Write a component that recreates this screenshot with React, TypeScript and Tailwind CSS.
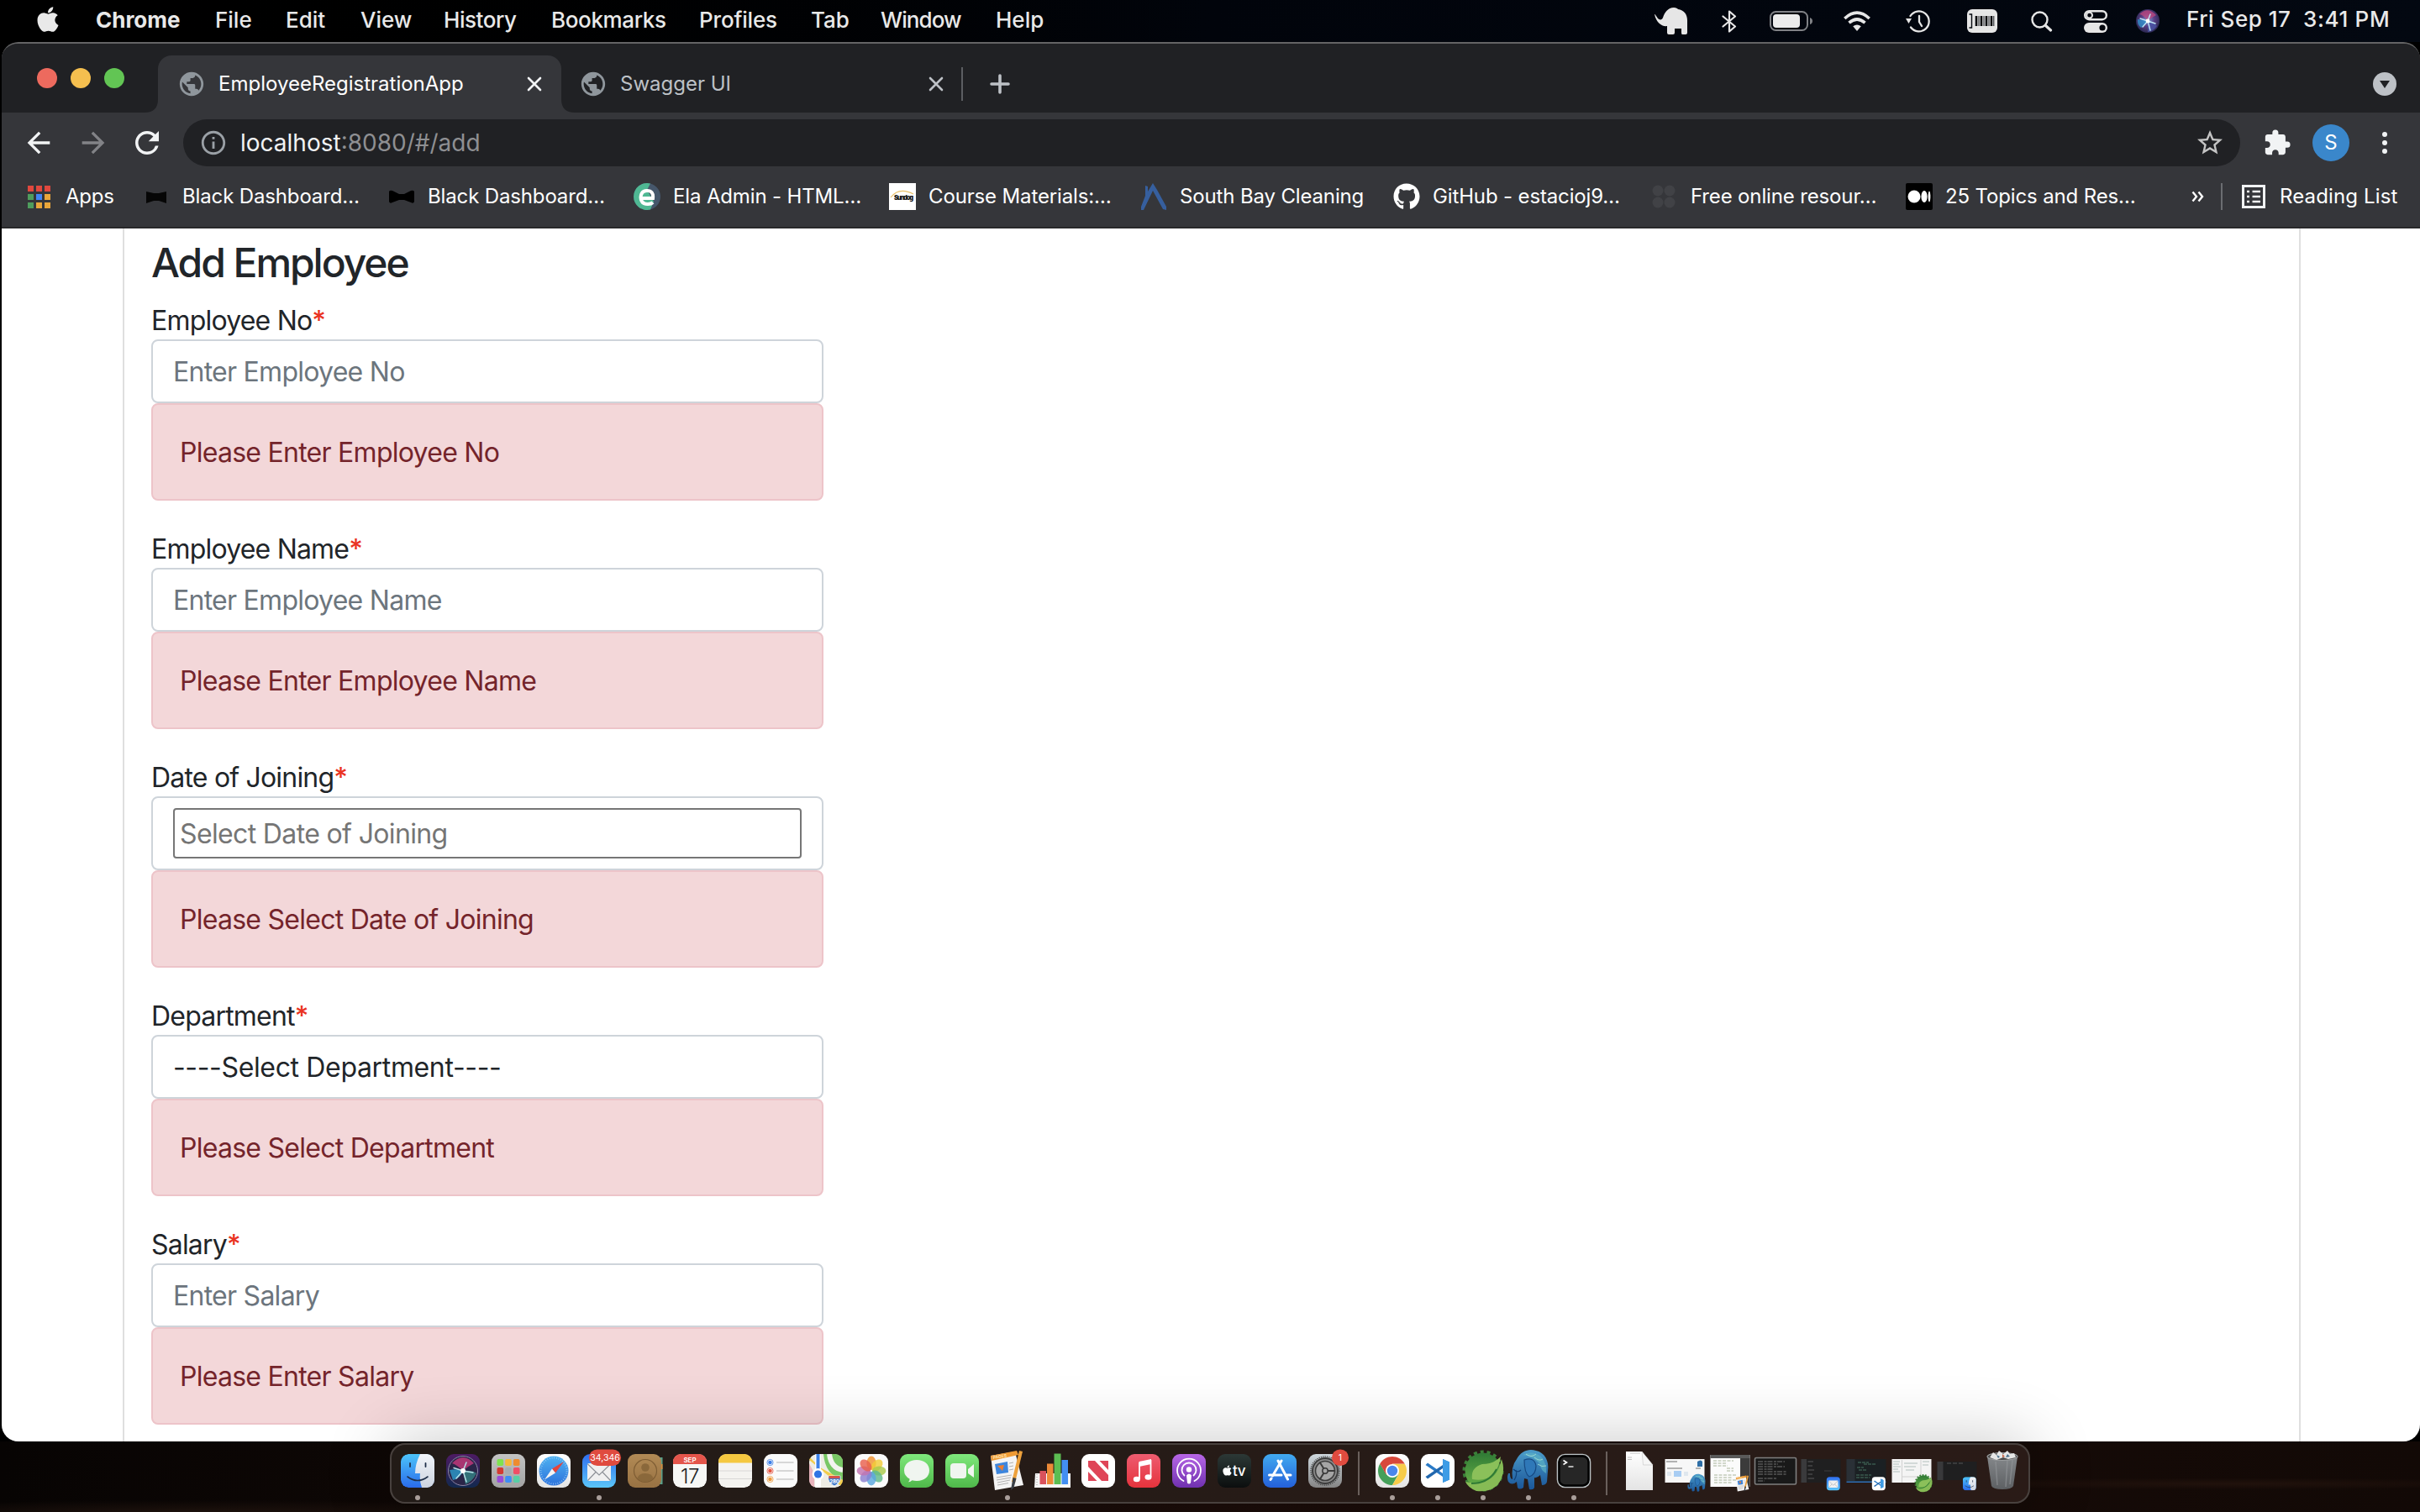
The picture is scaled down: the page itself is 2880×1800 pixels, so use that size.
import type { ReactNode } from "react";
import { FaApple, FaGithub } from "react-icons/fa";
import { MdArrowBack, MdArrowForward, MdExtension, MdInfoOutline, MdPublic, MdRefresh, MdStarBorder } from "react-icons/md";

/* ---------- Menu bar ---------- */

const menus = [
  { label: "Chrome", cls: "w-[142px] font-bold" },
  { label: "File", cls: "w-[84px]" },
  { label: "Edit", cls: "w-[89px]" },
  { label: "View", cls: "w-[99px]" },
  { label: "History", cls: "w-[128px] tracking-[-0.017em]" },
  { label: "Bookmarks", cls: "w-[176px] tracking-[-0.014em]" },
  { label: "Profiles", cls: "w-[133px] tracking-[-0.007em]" },
  { label: "Tab", cls: "w-[83px]" },
  { label: "Window", cls: "w-[137px] tracking-[-0.035em]" },
  { label: "Help", cls: "w-[80px]" },
];

function SiriOrb({ className }: { className: string }) {
  return (
    <svg className={className} viewBox="0 0 28 28">
      <defs>
        <radialGradient id="orbBg" cx="50%" cy="45%" r="55%">
          <stop offset="0" stopColor="#7f9fd8" />
          <stop offset="0.5" stopColor="#5a3f86" />
          <stop offset="1" stopColor="#2a2750" />
        </radialGradient>
      </defs>
      <circle cx="14" cy="14" r="14" fill="url(#orbBg)" />
      <path d="M4 6 Q14 -4 24 7 Q18 10 14 14 Q8 6 4 6Z" fill="#c0487f" opacity="0.75" />
      <path d="M2 12 Q8 12 14 14 Q10 20 6 22 Q1 18 2 12Z" fill="#2f8fc9" opacity="0.8" />
      <path d="M14 14 Q22 16 25 20 Q20 27 14 27Z" fill="#4a55a8" opacity="0.8" />
      <path d="M14 14 L5 11 M14 14 L8 21 M14 14 L17 25 M14 14 L23 17 M14 14 L17 6" stroke="#bfe6f5" strokeWidth="1.4" strokeLinecap="round" />
      <circle cx="14" cy="14" r="2.4" fill="#fff" />
    </svg>
  );
}

function MenuBar() {
  return (
    <header className="flex h-[50px] items-center bg-linear-to-r from-black via-[#01040b] to-[#030811] text-[26px] leading-none font-medium text-[#e9e9e9]">
      <div className="flex w-[114px] pl-[41px]">
        <FaApple className="-mt-1 h-[34px] w-[32px]" />
      </div>
      <nav className="flex w-[1855px] pb-[2px]">
        {menus.map((m) => (
          <span key={m.label} className={m.cls}>{m.label}</span>
        ))}
      </nav>
      <svg className="h-[32px] w-[40px]" viewBox="0 0 40 32" fill="#e6e6e6">
        <path d="M0 8 C1 8 2 10 4 13 C6 15 9 15 10 12 C12 6 16 0 23 0 C26 0 27 1 28 2 C35 3 39 8 39 15 V30 Q39 32 37 32 H33 Q32 32 32 30 V25 H24 V30 Q24 32 22 32 H17 Q15 32 15 30 V22 C9 23 2 18 0 8Z" />
      </svg>
      <svg className="ml-[40px] h-[27px] w-[18px]" viewBox="0 0 18 27" fill="none" stroke="#e6e6e6" strokeWidth="2.2" strokeLinejoin="round" strokeLinecap="round">
        <path d="M1.5 7.5 L16 19.5 L9 25.5 V1.5 L16 7.5 L1.5 19.5" />
      </svg>
      <svg className="ml-[39px] h-[24px] w-[51px]" viewBox="0 0 51 24">
        <rect x="1" y="1" width="44" height="22" rx="6.5" fill="none" stroke="#808286" strokeWidth="2" />
        <rect x="4" y="4" width="32" height="16" rx="4" fill="#ececec" />
        <path d="M48 8 Q51 9 51 12 Q51 15 48 16Z" fill="#808286" />
      </svg>
      <svg className="ml-[37px] h-[24px] w-[32px]" viewBox="0 0 32 24" fill="none" stroke="#e6e6e6" strokeWidth="3.6">
        <path d="M1.3 9 Q16 -4.6 30.7 9" />
        <path d="M6.5 14.2 Q16 5.8 25.5 14.2" />
        <path d="M11.2 18.3 Q16 14.6 20.8 18.3 L16 24Z" fill="#e6e6e6" stroke="none" />
      </svg>
      <svg className="ml-[41px] h-[27px] w-[31px]" viewBox="0 0 31 27" fill="none" stroke="#e6e6e6" strokeWidth="2.3" strokeLinecap="round">
        <path d="M6.5 7 A12 12 0 1 1 7 20.5" />
        <path d="M17 7 V14 L20 19" />
        <path d="M1 10 H8 L4.5 16Z" fill="#e6e6e6" stroke="none" />
      </svg>
      <svg className="ml-[43px] h-[28px] w-[38px]" viewBox="0 0 38 28">
        <rect width="36" height="28" rx="6" fill="#e6e6e6" />
        <path d="M2.5 6 H5.5 V22 H2.500" fill="none" stroke="#05080f" strokeWidth="1.4" />
        <path d="M11 8 V20 M17 8 V20 M23 8 V20 M29 8 V20" stroke="#05080f" strokeWidth="2.6" />
        <path d="M14 8 V20 M20 8 V20 M26 8 V20 M31.800 8 V20" stroke="#05080f" strokeWidth="0.9" />
      </svg>
      <svg className="ml-[38px] h-[25px] w-[26px]" viewBox="0 0 26 25" fill="none" stroke="#e6e6e6" strokeLinecap="round">
        <circle cx="10.5" cy="10.5" r="9" strokeWidth="2.4" />
        <path d="M17.5 17.5 L23.5 23" strokeWidth="3.2" />
      </svg>
      <svg className="ml-[37px] h-[27px] w-[28px]" viewBox="0 0 28 27">
        <rect x="1.2" y="1.2" width="25.6" height="10" rx="5" fill="none" stroke="#e6e6e6" strokeWidth="2.4" />
        <circle cx="6.6" cy="6.2" r="3.4" fill="none" stroke="#e6e6e6" strokeWidth="2" />
        <rect x="0" y="15" width="28" height="12" rx="6" fill="#e6e6e6" />
        <circle cx="22" cy="21" r="3.6" fill="#05080f" />
      </svg>
      <SiriOrb className="ml-[34px] h-[28px] w-[28px]" />
      <span className="ml-[32px] w-[139px] pb-[4px] tracking-[0.020em]">Fri Sep 17</span>
      <span className="pb-[4px] tracking-[0.025em]">3:41 PM</span>
    </header>
  );
}

/* ---------- Browser chrome ---------- */

function Cross({ color }: { color: string }) {
  return (
    <svg className="h-[18px] w-[18px]" viewBox="0 0 18 18" stroke={color} strokeWidth="2.6" strokeLinecap="round">
      <path d="M2 2 L16 16 M16 2 L2 16" />
    </svg>
  );
}

function TabStrip() {
  return (
    <div className="flex h-[82px] items-end bg-[#202124]">
      <div className="flex h-full w-[166px] items-center gap-4 pl-[42px]">
        <i className="h-6 w-6 rounded-full bg-[#ed6a5e]" />
        <i className="h-6 w-6 rounded-full bg-[#f5bf4f]" />
        <i className="h-6 w-6 rounded-full bg-[#62c554]" />
      </div>
      <svg className="h-4 w-5" viewBox="0 0 20 16"><path d="M20 0 Q20 16 4 16 H20Z" fill="#35363a" /></svg>
      <div className="flex h-[68px] w-[480px] items-center rounded-t-[16px] bg-[#35363a] pl-[23px] text-[24px] text-white">
        <MdPublic className="h-[34px] w-[34px] text-[#8f969c]" />
        <span className="w-[366px] pl-[15px]">EmployeeRegistrationApp</span>
        <span className="pl-[16px]"><Cross color="#f1f3f4" /></span>
      </div>
      <svg className="h-4 w-5" viewBox="0 0 20 16"><path d="M0 0 Q0 16 16 16 H0Z" fill="#35363a" /></svg>
      <div className="flex h-[68px] w-[456px] items-center pl-px text-[24px] text-[#bdc1c6]">
        <MdPublic className="h-[34px] w-[34px] text-[#8f969c]" />
        <span className="w-[382px] pl-[15px]">Swagger UI</span>
        <Cross color="#bdc1c6" />
      </div>
      <div className="flex h-[68px] items-center">
        <i className="h-[40px] w-[2px] bg-[#5c5e62]" />
        <svg className="ml-[32px] h-6 w-6" viewBox="0 0 24 24" stroke="#bdc1c6" strokeWidth="3.6" strokeLinecap="round">
          <path d="M12 2 V22 M2 12 H22" />
        </svg>
      </div>
      <div className="ml-auto flex h-[68px] items-center pr-[28px]">
        <svg className="h-7 w-7" viewBox="0 0 28 28">
          <circle cx="14" cy="14" r="14" fill="#bdc1c6" />
          <path d="M8 10 H20 L14 19Z" fill="#202124" />
        </svg>
      </div>
    </div>
  );
}

function Toolbar() {
  return (
    <div className="flex h-[72px] items-center text-[28px] text-[#f1f3f4]">
      <MdArrowBack className="ml-[24px] h-[40px] w-[40px]" />
      <MdArrowForward className="ml-[25px] h-[40px] w-[40px] text-[#828387]" />
      <MdRefresh className="ml-[23px] h-[42px] w-[42px]" />
      <div className="ml-[22px] flex h-[56px] w-[2448px] items-center rounded-full bg-[#202124] pl-[19px]">
        <MdInfoOutline className="h-[34px] w-[34px] text-[#9aa0a6]" />
        <span className="pl-[15px]">localhost</span>
        <span className="text-[#8e8f92]">:8080/#/add</span>
        <MdStarBorder className="mr-[18px] ml-auto h-[36px] w-[36px] text-[#c4c4c4]" />
      </div>
      <MdExtension className="ml-[27px] h-[34px] w-[34px]" />
      <span className="ml-[25px] flex h-[44px] w-[44px] items-center justify-center rounded-full bg-[#3a87cb] text-[24px] text-white">S</span>
      <svg className="ml-[39px] h-[28px] w-[6px]" viewBox="0 0 6 28" fill="#f1f3f4">
        <circle cx="3" cy="4" r="3" /><circle cx="3" cy="14" r="3" /><circle cx="3" cy="24" r="3" />
      </svg>
    </div>
  );
}

const appDots = ["bg-[#e0483e]", "bg-[#e0483e]", "bg-[#e0483e]", "bg-[#4f9d5d]", "bg-[#4285f4]", "bg-[#e9a63a]", "bg-[#4f9d5d]", "bg-[#e9a63a]", "bg-[#e9a63a]"];

const bookmarks: { label: string; cls: string; icon: ReactNode }[] = [
  {
    label: "Black Dashboard…", cls: "w-[292px]",
    icon: <path d="M4 10 L13 12 H19 L28 10 V24 L19 21 H13 L4 24Z" fill="#060606" />,
  },
  {
    label: "Black Dashboard…", cls: "w-[292px]",
    icon: <path d="M1 10 Q2 8 5 9 L13 13 H19 L27 9 Q30 8 31 10 V22 Q30 25 27 23 L19 20 H13 L5 23 Q2 25 1 22Z" fill="#000" />,
  },
  {
    label: "Ela Admin - HTML…", cls: "w-[304px]",
    icon: (
      <>
        <circle cx="16" cy="16" r="16" fill="#46576b" />
        <path d="M20 0.5 A16 16 0 1 0 20 31.5 L24 22 L16 8Z" fill="#4fb893" />
        <path d="M9 18 H23 Q24 9 16 9 Q9 9 8.5 17 Q9 25 17 25 Q21 25 23 23" fill="none" stroke="#fff" strokeWidth="4" />
      </>
    ),
  },
  {
    label: "Course Materials:…", cls: "w-[299px]",
    icon: (
      <>
        <rect width="32" height="32" fill="#fff" />
        <path d="M2 17 Q12 4 29 13" fill="none" stroke="#e9c068" strokeWidth="1.2" />
        <text x="6" y="20" fontSize="7.5" fontWeight="900" fill="#111" textLength="23">Sundog</text>
      </>
    ),
  },
  {
    label: "South Bay Cleaning", cls: "w-[301px]",
    icon: <path d="M1 32 L1 28 L6 15 V3 L9 4 V10 L15 0 L20 8 L31 28 V32 L27 31 L15 9 L4 32Z" fill="#365f9e" />,
  },
  { label: "GitHub - estacioj9…", cls: "w-[307px]", icon: null },
  {
    label: "Free online resour…", cls: "w-[303px]",
    icon: (
      <g fill="#414246">
        <circle cx="8" cy="9" r="6.5" /><circle cx="22" cy="9" r="6.5" /><circle cx="8" cy="23" r="6.5" /><circle cx="22" cy="23" r="6.5" />
      </g>
    ),
  },
  {
    label: "25 Topics and Res…", cls: "w-[340px]",
    icon: (
      <>
        <rect width="32" height="32" rx="2" fill="#000" />
        <circle cx="10" cy="16" r="7.5" fill="#fff" />
        <ellipse cx="22" cy="16" rx="3.6" ry="7" fill="#fff" />
        <ellipse cx="28" cy="16" rx="1.4" ry="6.5" fill="#fff" />
      </>
    ),
  },
];

function BookmarksBar() {
  return (
    <div className="flex h-[66px] items-center border-b-2 border-[#28282a] pb-[8px] text-[24px] whitespace-nowrap text-white">
      <div className="flex w-[168px] items-center pl-[31px]">
        <div className="grid w-[27px] grid-cols-3 gap-x-[3px] gap-y-[3px]">
          {appDots.map((c, i) => (
            <i key={i} className={`h-[7px] w-[7px] ${c}`} />
          ))}
        </div>
        <span className="pl-[18px] tracking-[-0.010em]">Apps</span>
      </div>
      {bookmarks.map((b, i) => (
        <div key={i} className={`flex items-center ${b.cls}`}>
          {b.icon ? <svg className="h-8 w-8 shrink-0" viewBox="0 0 32 32">{b.icon}</svg> : <FaGithub className="h-8 w-8 shrink-0" />}
          <span className="pl-[15px] tracking-[-0.006em]">{b.label}</span>
        </div>
      ))}
      <svg className="h-[14px] w-[15px]" viewBox="0 0 15 14" fill="none" stroke="#fff" strokeWidth="2.4">
        <path d="M1.5 1.5 L6 7 L1.5 12.5 M8.5 1.5 L13 7 L8.5 12.5" />
      </svg>
      <i className="ml-[20px] h-8 w-[2px] bg-[#6b6d71]" />
      <svg className="ml-[23px] h-7 w-7" viewBox="0 0 28 28">
        <rect x="1.5" y="1.5" width="25" height="25" fill="none" stroke="#f1f3f4" strokeWidth="3" />
        <path d="M6 8 H9 M6 14 H9 M6 20 H9 M12.5 8 H22 M12.5 14 H22 M12.5 20 H22" stroke="#f1f3f4" strokeWidth="2.4" />
      </svg>
      <span className="pl-[17px] tracking-[0.006em]">Reading List</span>
    </div>
  );
}

/* ---------- Page ---------- */

const fieldBox = "block h-[76px] w-full rounded-[8px] border-2 border-[#ced4da] bg-white px-[24px] text-[32px] text-[#212529] outline-none placeholder:text-[#6c757d]";

function Field({ label, error, children }: { label: string; error: string; children: ReactNode }) {
  return (
    <div className="mb-[32px]">
      <label className="block h-[48px] pt-[2px] leading-[48px] tracking-[-0.025em]">
        {label}<span className="font-medium text-[#ea3323]">*</span>
      </label>
      {children}
      <div className="rounded-[8px] border-2 border-[#edc4c9] bg-[#f3d7d9] px-[32px] pt-[33px] pb-[31px] leading-[48px] text-[#74242b]">{error}</div>
    </div>
  );
}

function Page() {
  return (
    <main className="flex h-[1444px] bg-white">
      <section className="ml-[144px] w-[2592px] border-x-2 border-[#dfdfdf] px-[32px] pt-[12px] text-[32px] tracking-[-0.023em] text-[#212529]">
        <h4 className="mb-[14px] text-[48px] leading-[58px] font-medium tracking-[-0.043em]">Add Employee</h4>
        <form className="w-[800px]">
          <Field label="Employee No" error="Please Enter Employee No">
            <input className={`${fieldBox} tracking-[-0.023em]`} placeholder="Enter Employee No" />
          </Field>
          <Field label="Employee Name" error="Please Enter Employee Name">
            <input className={`${fieldBox} tracking-[-0.023em]`} placeholder="Enter Employee Name" />
          </Field>
          <Field label="Date of Joining" error="Please Select Date of Joining">
            <div className="flex h-[88px] items-center rounded-[8px] border-2 border-[#ced4da] px-[24px]">
              <input className="h-[60px] w-full rounded-[4px] border-2 border-[#767676] px-[6px] tracking-[-0.020em] outline-none placeholder:text-[#757575]" placeholder="Select Date of Joining" />
            </div>
          </Field>
          <Field label="Department" error="Please Select Department">
            <select className={`${fieldBox} appearance-none pt-[2px] tracking-[-0.011em]`}>
              <option>----Select Department----</option>
            </select>
          </Field>
          <Field label="Salary" error="Please Enter Salary">
            <input className={`${fieldBox} tracking-[-0.023em]`} placeholder="Enter Salary" />
          </Field>
        </form>
      </section>
    </main>
  );
}

/* ---------- Dock ---------- */

function Tile({ fill }: { fill: string }) {
  return <rect x="7" y="13" width="40" height="40" rx="9" fill={fill} />;
}

function Slot({ children, running }: { children: ReactNode; running?: boolean }) {
  return (
    <svg className="h-[72px] w-[54px] shrink-0 overflow-visible" viewBox="0 0 54 72">
      {children}
      {running && <circle cx="27" cy="65" r="3" fill="#a99e9a" />}
    </svg>
  );
}

function Gradients() {
  const list: [string, string, string][] = [
    ["gBlue", "#4cc4fa", "#2a6bea"], ["gMail", "#2f6ff0", "#5bc6f9"], ["gGreen", "#7fe87c", "#4fb84a"],
    ["gRed", "#ee5c70", "#e5333c"], ["gPurple", "#b766e6", "#7031b0"], ["gTv", "#2c3836", "#0b0e0e"],
    ["gStore", "#41aaf0", "#2460da"], ["gGray", "#cfd8de", "#858585"], ["gWhite", "#ffffff", "#e4e4e4"],
    ["gLaunch", "#c3c3c3", "#a3a3a3"], ["gTan", "#b28a55", "#987243"], ["gFace", "#f2f5fa", "#ccd3df"],
    ["gSafari", "#4fb2f1", "#2c72dc"], ["gSpring", "#2f7a35", "#6bb348"], ["gElephant", "#4c9cca", "#1a5699"],
    ["gTrash", "#84878a", "#5d6063"], ["gSiri", "#4d1b63", "#12294f"],
  ];
  return (
    <svg className="absolute h-0 w-0">
      <defs>
        {list.map(([id, a, b]) => (
          <linearGradient key={id} id={id} x1="0" y1="0" x2="0" y2="1">
            <stop offset="0" stopColor={a} />
            <stop offset="1" stopColor={b} />
          </linearGradient>
        ))}
        <clipPath id="tileClip"><rect x="7" y="13" width="40" height="40" rx="9" /></clipPath>
      </defs>
    </svg>
  );
}

function FinderArt() {
  return (
    <g clipPath="url(#tileClip)">
      <Tile fill="url(#gBlue)" />
      <path d="M30 13 Q24 25 24 36 H30 Q29 45 32 53 H47 V13Z" fill="url(#gFace)" />
      <path d="M18 24 V28 M36.5 24 V28" stroke="#20304a" strokeWidth="1.8" strokeLinecap="round" />
      <path d="M15 40 Q27 49 39 40" fill="none" stroke="#20304a" strokeWidth="1.6" strokeLinecap="round" />
    </g>
  );
}

function EnvelopeArt() {
  return (
    <>
      <Tile fill="url(#gMail)" />
      <rect x="13" y="24" width="28" height="21" rx="2" fill="#f0f0f0" />
      <path d="M13.5 25 L27 38 L40.500 25 M13.5 44.500 L23 34.5 M40.500 44.500 L31 34.5" fill="none" stroke="#8b8f95" strokeWidth="1.100" />
    </>
  );
}

function VsCodeArt() {
  return (
    <>
      <Tile fill="#fff" />
      <path d="M33 19 L41 22.5 V43.5 L33 47 V40 L12.5 26 L15 23.500 L33 36Z" fill="#2a7ac6" />
      <path d="M33 26 L12.5 40 L15 42.5 L33 30Z" fill="#2167ae" />
      <path d="M33 19 L41 22.5 V43.5 L33 47Z" fill="#3d9ce6" />
    </>
  );
}

function SpringArt() {
  return (
    <>
      <circle cx="27" cy="33" r="22.5" fill="none" stroke="#3b8038" strokeWidth="4" strokeDasharray="4 3.85" />
      <circle cx="27" cy="33" r="21.5" fill="url(#gSpring)" />
      <path d="M49 19 Q55 36 44 50 Q34 59 19 57 Q9 53 6 46 Q24 50 36 42 Q45 36 49 19Z" fill="#86bb55" />
      <path d="M48 16 Q40 25 26 25 Q12 29 14 43 Q30 46 39 37 Q46 30 48 16Z" fill="#8bc05a" />
      <path d="M13 48 Q34 48 43 31" fill="none" stroke="#2f7a35" strokeWidth="2" />
    </>
  );
}

function ElephantArt() {
  return (
    <>
      <path d="M13 19 C18 9 28 6 36 9 C46 11 52 21 50 33 L49 46 Q48 50 43 50 L41 38 Q37 42 34 41 V53 Q33 56 28 55 L26 43 L22 42 L21 53 Q16 56 14 53 L13 46 Q7 51 3 46 Q1 41 3 36 L5 36 Q5 43 8 43 Q6 28 13 19Z" fill="url(#gElephant)" />
      <path d="M20 14 Q32 8 42 16 Q49 24 48 36 Q42 33 40 24 Q32 15 20 14Z" fill="#5bb0c4" opacity="0.7" />
      <path d="M22 20 Q34 16 36 27 Q36 37 28 40 Q22 36 22 20Z" fill="#2f78b8" stroke="#174a83" strokeWidth="1.2" />
      <path d="M9 31 Q14 36 18 32 M10 44 Q14 38 12 32" fill="none" stroke="#103f76" strokeWidth="1.2" />
      <path d="M24 13 Q30 18 36 13 M34 17 Q40 22 44 19 M38 25 Q43 29 48 27" fill="none" stroke="#9ad8d4" strokeWidth="1" />
    </>
  );
}

function PagesArt() {
  return (
    <>
      <path d="M7 15 L36 10 L46 50 L12 56Z" fill="#f4f4f4" />
      <path d="M7 15 L38 9 L40 14 L8 21Z" fill="#ee9a34" />
      <text x="10" y="19" fontSize="5" fontWeight="700" fill="#ffe2b0" transform="rotate(-9 10 19)">PAGES</text>
      <path d="M12 25 L27 22 L28 35 L14 37Z" fill="#3d86dd" />
      <path d="M15 27 L23 26 L21 33Z" fill="#ee7d2d" />
      <path d="M29 24 L34 23 M29 28 L34 27 M29 32 L34 31 M14 41 L32 38 M14 44 L31 41 M15 47 L30 44 M15 50 L28 47.5" stroke="#a9a9a9" strokeWidth="0.9" />
      <path d="M41 9 L45 10 L36 47 L32 46Z" fill="#eda13c" />
      <path d="M33.500 41 L37.500 42 L34.500 53 L31 56Z" fill="#3a3f46" />
    </>
  );
}

const launchColors = ["#7fe34e", "#f6b83a", "#ee8c2e", "#d43a31", "#a7abb0", "#ef4e66", "#9a4cd8", "#3d8df5", "#58cfa6"];
const petals = ["#f0932f", "#f2cc38", "#a9c94a", "#5fb98a", "#5aa7df", "#8b7fcf", "#c274b0", "#e8604e"];

function Badge({ x, w, text }: { x: number; w: number; text: string }) {
  return (
    <>
      <rect x={x} y="7.5" width={w} height="19.5" rx="9.75" fill="#e04b3f" />
      <text x={x + w / 2} y="21" textAnchor="middle" fontSize="10.500" fill="#fff">{text}</text>
    </>
  );
}

function WindowThumb({ children, art, lift = 0, fill = "#1f1f20", h = 28 }: { children?: ReactNode; art: ReactNode; lift?: number; fill?: string; h?: number }) {
  return (
    <Slot>
      <rect x="3.5" y={19 - lift} width="47" height={h} fill={fill} />
      {children}
      <g transform="translate(31 35) scale(0.4)">{art}</g>
    </Slot>
  );
}

function Divider({ className }: { className: string }) {
  return (
    <div className={`flex shrink-0 items-center justify-center ${className}`}>
      <i className="h-[52px] w-[2px] bg-[#6a605c]" />
    </div>
  );
}

function Dock() {
  return (
    <div className="relative flex h-[72px] w-[1952px] rounded-[18px] bg-linear-to-r from-[#221b17] to-[#2a1b17] px-[6px] shadow-[inset_0_0_0_2px_#48413e,0_0_80px_rgba(0,0,0,0.24)]">
      <Slot running><FinderArt /></Slot>
      <Slot>
        <Tile fill="url(#gSiri)" />
        <circle cx="27" cy="33" r="17.5" fill="#2a2548" stroke="#8c86a6" strokeWidth="1" />
        <path d="M14 24 Q27 10 40 24 Q32 28 27 33 Q20 26 14 24Z" fill="#c83a7d" opacity="0.8" />
        <path d="M11 32 Q20 30 27 33 Q24 42 15 44Z" fill="#2c9ccd" opacity="0.8" />
        <path d="M27 33 Q38 32 43 36 Q38 46 30 49Z" fill="#38a59b" opacity="0.6" />
        <path d="M27 33 L16 29.500 M27 33 L19 42 M27 33 L31 46 M27 33 L39 35 M27 33 L31 23" stroke="#b5e2e8" strokeWidth="1.5" strokeLinecap="round" />
        <circle cx="27" cy="33" r="3" fill="#fff" />
      </Slot>
      <Slot>
        <Tile fill="url(#gLaunch)" />
        {launchColors.map((c, i) => (
          <rect key={c} x={13.5 + (i % 3) * 9.7} y={19 + Math.floor(i / 3) * 10} width="7.6" height="8" rx="1.8" fill={c} />
        ))}
      </Slot>
      <Slot>
        <Tile fill="url(#gWhite)" />
        <circle cx="27" cy="33" r="17.5" fill="url(#gSafari)" />
        <circle cx="27" cy="33" r="15.5" fill="none" stroke="#a5d2f5" strokeWidth="2" strokeDasharray="0.7 2" />
        <path d="M39 22 L25 30.5 L29 35.5Z" fill="#e5443a" />
        <path d="M16 43.5 L25 30.5 L29 35.5Z" fill="#f4f4f4" />
      </Slot>
      <Slot running>
        <EnvelopeArt />
        <Badge x={15} w={38} text="34,346" />
      </Slot>
      <Slot>
        <path d="M44 17 H48.5 V49 H44Z" fill="#57a08a" />
        <path d="M44 25 H48.5 V31 H44Z" fill="#d98c3a" />
        <Tile fill="url(#gTan)" />
        <circle cx="28" cy="33" r="13.5" fill="none" stroke="#7e5d34" strokeWidth="1.2" />
        <circle cx="28" cy="29" r="4.8" fill="#8a683b" />
        <path d="M18.5 42 Q20 36 28 36 Q36 36 37.5 42 Q28 50 18.5 42Z" fill="#8a683b" />
      </Slot>
      <Slot>
        <g clipPath="url(#tileClip)">
          <Tile fill="#f7f7f5" />
          <rect x="7" y="13" width="40" height="12" fill="#e4554b" />
        </g>
        <text x="27" y="22.5" textAnchor="middle" fontSize="8" fontWeight="600" fill="#fff">SEP</text>
        <text x="27" y="47.5" textAnchor="middle" fontSize="24" fontWeight="300" letterSpacing="-0.5" fill="#222">17</text>
      </Slot>
      <Slot>
        <g clipPath="url(#tileClip)">
          <Tile fill="#f4f3f0" />
          <rect x="7" y="13" width="40" height="10.5" fill="#f5c840" />
          <path d="M7 33 H47 M7 42.5 H47" stroke="#d6d5d2" strokeWidth="0.9" />
        </g>
      </Slot>
      <Slot>
        <Tile fill="#fafafa" />
        {["#3d7fe8", "#e4533f", "#ee9a3c"].map((c, i) => (
          <g key={c}>
            <circle cx="14.5" cy={23 + i * 10} r="2.3" fill={c} />
            <circle cx="14.5" cy={23 + i * 10} r="3.6" fill="none" stroke={c} strokeWidth="0.8" />
            <path d={`M22 ${23 + i * 10} H42.5`} stroke="#c5c5c5" strokeWidth="1.3" />
          </g>
        ))}
      </Slot>
      <Slot>
        <g clipPath="url(#tileClip)">
          <Tile fill="#eeece4" />
          <path d="M24 13 H47 V44 Q26 38 24 13Z" fill="#79c765" />
          <path d="M31 13 Q33 30 47 32" fill="none" stroke="#f3f3ef" strokeWidth="6" />
          <path d="M7 20 L47 53 V44 L20 29 L7 16Z" fill="#f2cd4c" />
          <path d="M7 24 V53 H13 V36Z" fill="#e9b4bd" />
          <path d="M14 13 H21 V53 H14Z" fill="#fff" />
          <path d="M15.5 13 H19.5 V34 H15.5Z" fill="#3d81e8" />
          <circle cx="17.5" cy="37" r="7" fill="#fff" />
          <circle cx="17.5" cy="37" r="4.6" fill="#2f74e4" />
          <path d="M30 39 H44 Q46 47 37 51 Q28 47 30 39Z" fill="#3f78c8" stroke="#fff" strokeWidth="0.8" />
          <path d="M30.5 39 H43.5 V42 H30.5Z" fill="#d4534b" />
          <text x="37" y="47.5" textAnchor="middle" fontSize="6" fontWeight="700" fill="#fff">280</text>
        </g>
      </Slot>
      <Slot>
        <Tile fill="#fbfbfb" />
        {petals.map((c, i) => (
          <ellipse key={c} cx="27" cy="23.8" rx="5.6" ry="8.2" fill={c} opacity="0.82" transform={`rotate(${i * 45} 27 33)`} />
        ))}
      </Slot>
      <Slot>
        <Tile fill="url(#gGreen)" />
        <path d="M27 20 C36 20 42 25 42 32.5 C42 40 36 45 27 45 Q24 45 21.5 44.3 Q19 46.5 17 46.3 Q19 44.5 18.5 42.5 Q12 39 12 32.5 C12 25 18 20 27 20Z" fill="#f0f5f0" />
      </Slot>
      <Slot>
        <Tile fill="url(#gGreen)" />
        <rect x="13" y="24" width="19" height="18" rx="4" fill="#f0f5f0" />
        <path d="M34 31 L41 25 V41 L34 36Z" fill="#f0f5f0" />
      </Slot>
      <Slot running><PagesArt /></Slot>
      <Slot>
        <path d="M6 36 H48 V53 H5Z" fill="#f6f6f6" />
        <path d="M8 37 V51" stroke="#9c9c9c" strokeDasharray="1 2" />
        <rect x="11.5" y="33" width="7.5" height="16" fill="#d9525c" />
        <rect x="20" y="24.5" width="7.5" height="24.5" fill="#ed8a37" />
        <rect x="28.5" y="12.5" width="8" height="36.5" fill="#5cbd52" />
        <rect x="37.5" y="20" width="7.5" height="29" fill="#438ff2" />
      </Slot>
      <Slot>
        <Tile fill="#fff" />
        <path d="M15 21 H23 L39 38 V45 H31 L15 28Z" fill="#df4558" />
        <path d="M28.5 21 H39 V32Z M15 34 L25.5 45 H15Z" fill="#df4558" />
      </Slot>
      <Slot>
        <Tile fill="url(#gRed)" />
        <path d="M22 43 V24 L35.5 21 V40" fill="none" stroke="#fff" strokeWidth="1.8" />
        <path d="M21.5 22 L36 19 V25 L21.5 28Z" fill="#fff" />
        <ellipse cx="18.8" cy="43" rx="4" ry="3.3" fill="#fff" />
        <ellipse cx="32.5" cy="40.5" rx="4" ry="3.3" fill="#fff" />
      </Slot>
      <Slot>
        <Tile fill="url(#gPurple)" />
        <g fill="none" stroke="#fff" strokeWidth="1.8" strokeLinecap="round">
          <path d="M20.5 45 A14 14 0 1 1 33.5 45" />
          <path d="M21.5 38.5 A8.5 8.5 0 1 1 32.5 38.5" />
        </g>
        <circle cx="27" cy="31.5" r="3.2" fill="#fff" />
        <path d="M24 38.5 Q27 34.5 30 38.5 L29 47.5 Q27 49.5 25 47.5Z" fill="#fff" />
      </Slot>
      <Slot>
        <Tile fill="url(#gTv)" />
        <g transform="translate(11.5 25.5)"><FaApple size={14} color="#fff" /></g>
        <text x="25" y="39" fontSize="17" fontWeight="500" fill="#fff" letterSpacing="-0.5">tv</text>
      </Slot>
      <Slot>
        <Tile fill="url(#gStore)" />
        <g stroke="#fff" strokeWidth="3" strokeLinecap="round">
          <path d="M29 21 L18.5 39 M25 21 L36.5 43 M14.5 38 H29 M34.5 38 H40 M17 42 L16 43.5" />
        </g>
      </Slot>
      <Slot>
        <Tile fill="url(#gGray)" />
        <circle cx="27" cy="33" r="15" fill="#8a8a8a" stroke="#3c3c3c" strokeWidth="2" />
        <circle cx="27" cy="33" r="17" fill="none" stroke="#444" strokeWidth="1.4" strokeDasharray="1.2 1.2" />
        <circle cx="27" cy="33" r="11.500" fill="#a5a5a5" stroke="#3d3d3d" strokeWidth="1.6" />
        <path d="M27 33 H39 M27 33 L20.500 22.5 M27 33 L20.500 43.5" stroke="#3a3a3a" strokeWidth="2" />
        <circle cx="27" cy="33" r="3.2" fill="#a5a5a5" stroke="#3a3a3a" strokeWidth="1.5" />
        <Badge x={35} w={20} text="1" />
      </Slot>
      <Divider className="w-[26px]" />
      <Slot running>
        <Tile fill="url(#gWhite)" />
        <path d="M12.28 24.5 A17 17 0 0 0 27 50 L34 37.5 H20Z" fill="#45a05a" />
        <path d="M41.72 24.5 A17 17 0 0 1 27 50 L34.500 37 L27 24.5Z" fill="#f7cc4a" />
        <path d="M27 24.5 H41.72 A17 17 0 0 0 12.28 24.5 L19.6 37.2Z" fill="#d8483b" />
        <circle cx="27" cy="33" r="8" fill="#fff" />
        <circle cx="27" cy="33" r="6.2" fill="#4a86ec" />
      </Slot>
      <Slot running><VsCodeArt /></Slot>
      <Slot running><SpringArt /></Slot>
      <Slot running><ElephantArt /></Slot>
      <Slot running>
        <rect x="7.5" y="13.5" width="39" height="39" rx="9" fill="#252525" stroke="#b9c0c2" strokeWidth="1.6" />
        <rect x="9.5" y="15.5" width="35" height="35" rx="7" fill="#262626" stroke="#000" strokeWidth="2.4" />
        <path d="M14.5 20.5 L18.5 23 L14.5 25.5" fill="none" stroke="#fff" strokeWidth="1.6" />
        <path d="M20.5 28 H26.5" stroke="#fff" strokeWidth="1.3" />
      </Slot>
      <Divider className="w-[24px]" />
      <Slot>
        <path d="M11 10 H30 L43 26 V56 H11Z" fill="url(#gWhite)" />
        <path d="M30 10 L43 26 H31.5Z" fill="#f6f6f6" stroke="#c4c4c4" strokeWidth="0.6" />
        <path d="M13 17 H18 M13 19.5 H18 M16 12 H28" stroke="#b5b5b5" strokeWidth="0.8" />
      </Slot>
      <WindowThumb fill="#f7f7f7" art={<g transform="translate(-4 -4) scale(1.1)"><ElephantArt /></g>}>
        <path d="M5 22 H18 M6 30 H24 M40 30 H46" stroke="#6d6d6d" strokeWidth="1" />
        <rect x="14" y="33" width="9" height="7" fill="#a9cdf3" />
        <path d="M6 34 H11 V39 H6Z M26 34 H31 V39 H26Z" fill="#dfe7ee" />
        <path d="M42 22 Q46 19 48 22 V28 H42Z" fill="#2f6ea6" />
      </WindowThumb>
      <WindowThumb fill="#fbfbfb" lift={5} h={38} art={<PagesArt />}>
        <rect x="3.5" y="14" width="47" height="4" fill="#5a5a5a" />
        <rect x="39" y="18" width="11.5" height="34" fill="#3b3b3b" />
        <path d="M7 21 H31 M7 24 H22 M7 27 H24 M23 30 H31 M23 33 H31 M8 38 H34 M8 41 H30 M8 44 H34 M8 47 H30" stroke="#a8b49a" strokeWidth="1" strokeDasharray="4 1.5" />
      </WindowThumb>
      <Slot>
        <rect x="2.5" y="17.5" width="49" height="31.5" rx="1.5" fill="#191919" stroke="#7f7f7f" strokeWidth="1.6" />
        <path d="M6 22 H38 M6 25 H30 M6 28 H38 M6 31 H24 M6 34 H40 M6 37 H40 M6 42 H28 M6 45 H14" stroke="#808080" strokeWidth="0.9" strokeDasharray="6 1.5 3 1" />
      </Slot>
      <WindowThumb art={<EnvelopeArt />}>
        <rect x="3.5" y="19" width="6.5" height="28" fill="#3a3a3c" />
        <path d="M11.5 22 H18 M11.5 27 H17 M11.5 32 H19 M11.5 37 H17 M11.5 42 H19" stroke="#5b5b5b" strokeWidth="1" />
        <path d="M31 33 H40" stroke="#484848" strokeWidth="0.8" />
      </WindowThumb>
      <WindowThumb fill="#1b2023" art={<VsCodeArt />}>
        <rect x="3.5" y="45.5" width="47" height="1.5" fill="#2f6fb5" />
        <rect x="3.5" y="19" width="10" height="26" fill="#2a3036" />
        <path d="M17 23 H30 M24 25 H38 M16 29 H24 M18 32 H28 M15 38 H33 M15 41 H31" stroke="#4f7f6a" strokeWidth="0.9" strokeDasharray="4 1" />
      </WindowThumb>
      <WindowThumb fill="#f4f4f4" art={<g transform="translate(-4 -4) scale(1.08)"><SpringArt /></g>}>
        <path d="M5 22 H13 M5 25 H12 M5 28 H14 M5 31 H11 M5 34 H13 M18 24 H34 M18 28 H32 M20 32 H30 M40 22 H48 M40 26 H47" stroke="#a9b9b5" strokeWidth="0.9" />
        <path d="M15.5 20 V47 M38 20 V47 M16 40 H38" stroke="#c8c8c8" strokeWidth="0.8" />
      </WindowThumb>
      <WindowThumb lift={-3} h={22} art={<FinderArt />}>
        <rect x="3.5" y="22" width="7" height="22" fill="#39393b" />
        <path d="M15 24 H35" stroke="#666" strokeWidth="0.8" strokeDasharray="5 2" />
      </WindowThumb>
      <Slot>
        <path d="M9 16 L45 16 L40 51 Q38 55 27 55 Q16 55 14 51Z" fill="url(#gTrash)" />
        <path d="M19 22 L21 50 M33 20 L31 52 M39 20 L36 49" stroke="#94979a" strokeWidth="1.5" opacity="0.6" />
        <ellipse cx="27" cy="16" rx="18" ry="4.5" fill="#4a4a4a" stroke="#9b9ea0" strokeWidth="1.2" />
        <path d="M12 17 L16 11 L20 14 L23 9 L28 13 L33 9 L36 13 L41 12 L43 17 L34 19 L28 17 L20 20Z" fill="#e6e6e6" />
        <path d="M20 14 L24 16 L22 18Z M33 13 L36 16 L31 17Z" fill="#4a6f8a" />
        <path d="M27 13 L30 16 L27 17Z" fill="#c2603f" />
      </Slot>
    </div>
  );
}

export default function App() {
  return (
    <div className="flex h-[1800px] w-[2880px] flex-col overflow-hidden bg-black font-[Inter,sans-serif]">
      <Gradients />
      <MenuBar />
      <div className="ml-[2px] h-[1666px] shrink-0 overflow-hidden rounded-[20px] border-t-2 border-[#646465] bg-[#35363a]">
        <TabStrip />
        <Toolbar />
        <BookmarksBar />
        <Page />
      </div>
      <div className="flex h-[84px] justify-center bg-[radial-gradient(ellipse_at_8%_100%,#1c110c,transparent_12%),radial-gradient(ellipse_at_92%_60%,#21120c,transparent_10%),linear-gradient(90deg,#070403,#1b0d09_50%,#120906)] pt-[2px]">
        <Dock />
      </div>
    </div>
  );
}
